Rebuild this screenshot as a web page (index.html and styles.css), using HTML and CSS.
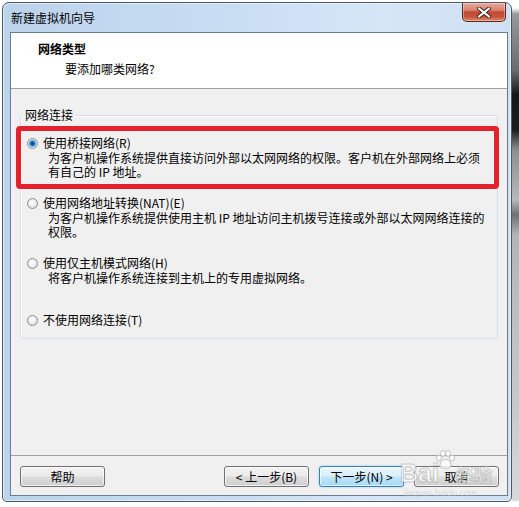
FILE: index.html
```html
<!DOCTYPE html>
<html lang="zh-CN">
<head>
<meta charset="utf-8">
<title>新建虚拟机向导</title>
<link rel="stylesheet" href="styles.css">
</head>
<body>
<div class="page">
  <div class="window">
    <div class="titlebar">
      <span class="title">新建虚拟机向导</span>
      <span class="close">
        <svg width="14" height="11" viewBox="0 0 14 11">
          <path d="M2 1.5 L12 9.5 M12 1.5 L2 9.5" stroke="#3a2420" stroke-width="4" stroke-linecap="round"/>
          <path d="M2 1.5 L12 9.5 M12 1.5 L2 9.5" stroke="#ffffff" stroke-width="2.2" stroke-linecap="round"/>
        </svg>
      </span>
    </div>
    <div class="client">
      <div class="header">
        <div class="h-title">网络类型</div>
        <div class="h-sub">要添加哪类网络?</div>
      </div>
      <div class="content">
        <fieldset class="group">
          <legend>网络连接</legend>
          <div class="options">
            <div class="option">
              <div class="opt-label"><span class="radio checked"></span>使用桥接网络(R)</div>
              <div class="opt-desc">为客户机操作系统提供直接访问外部以太网网络的权限。客户机在外部网络上必须<br>有自己的 IP 地址。</div>
            </div>
            <div class="option">
              <div class="opt-label"><span class="radio"></span>使用网络地址转换(NAT)(E)</div>
              <div class="opt-desc">为客户机操作系统提供使用主机 IP 地址访问主机拨号连接或外部以太网网络连接的<br>权限。</div>
            </div>
            <div class="option option-tall">
              <div class="opt-label"><span class="radio"></span>使用仅主机模式网络(H)</div>
              <div class="opt-desc">将客户机操作系统连接到主机上的专用虚拟网络。</div>
            </div>
            <div class="option">
              <div class="opt-label"><span class="radio"></span>不使用网络连接(T)</div>
            </div>
          </div>
        </fieldset>
        <div class="highlight"></div>
      </div>
      <div class="footer">
        <button class="btn">帮助</button>
        <span class="spacer"></span>
        <button class="btn">&lt; 上一步(B)</button>
        <button class="btn btn-default">下一步(N) &gt;</button>
        <button class="btn">取消</button>
      </div>
    </div>
  </div>
  <div class="desk"></div>
  <div class="watermark">
    <span class="wm-bai">Bai</span>
    <svg class="wm-paw" width="22" height="20" viewBox="0 0 22 20">
      <g fill="rgba(255,255,255,0.8)" stroke="rgba(170,170,170,0.7)" stroke-width="1">
        <ellipse cx="5" cy="8" rx="2.5" ry="3"/>
        <ellipse cx="9" cy="3.5" rx="2.5" ry="3"/>
        <ellipse cx="14" cy="3.5" rx="2.5" ry="3"/>
        <ellipse cx="18" cy="8" rx="2.5" ry="3"/>
        <path d="M6 16 C6 11 9 9.5 11.5 9.5 C14 9.5 17 11 17 16 C17 19 6 19 6 16 Z"/>
      </g>
    </svg>
    <span class="wm-jy">经验</span>
    <span class="wm-url">jingyan.baidu.com</span>
  </div>
</div>
</body>
</html>
```
FILE: styles.css
```css
html, body {
  margin: 0;
  padding: 0;
  background: #ffffff;
}
body {
  font-family: "Noto Sans CJK SC", "Liberation Sans", sans-serif;
  font-size: 12px;
  color: #000;
}
.page {
  position: relative;
  width: 519px;
  height: 507px;
  display: flex;
  align-items: flex-start;
  overflow: hidden;
}
.window {
  margin: 2px 0 0 2px;
  width: 510px;
  height: 500px;
  box-sizing: border-box;
  border: 1px solid #4a5866;
  border-radius: 7px 7px 5px 5px;
  background: linear-gradient(to right, #bcd3ec 0%, #c7dcf2 40%, #d6e6f7 75%, #cfe0f3 100%);
  box-shadow: inset 0 0 0 1px rgba(255,255,255,0.55);
  display: flex;
  flex-direction: column;
}
.titlebar {
  height: 29px;
  display: flex;
  align-items: flex-start;
}
.title {
  padding: 8px 0 0 8px;
  line-height: 14px;
  color: #000;
  flex: 1;
}
.close {
  width: 44px;
  height: 19px;
  margin-right: 5px;
  box-sizing: border-box;
  border: 1px solid #5b2a22;
  border-top: none;
  border-radius: 0 0 5px 5px;
  background: linear-gradient(to bottom, #e9a99b 0%, #d8826f 40%, #c24a30 50%, #c3523a 75%, #e08a64 100%);
  box-shadow: inset 0 0 0 1px rgba(255,255,255,0.35);
  display: flex;
  align-items: center;
  justify-content: center;
}
.client {
  margin: 0 3px 0 7px;
  width: 498px;
  height: 464px;
  box-sizing: border-box;
  border: 1px solid #6a7c90;
  background: #f0f0f0;
  display: flex;
  flex-direction: column;
}
.header {
  height: 55px;
  background: #ffffff;
  border-bottom: 1px solid #a0a0a0;
  padding: 9px 0 0 27px;
  box-sizing: content-box;
  height: 46px;
}
.h-title {
  font-weight: bold;
  line-height: 14px;
}
.h-sub {
  line-height: 14px;
  margin-top: 6px;
  padding-left: 27px;
}
.content {
  position: relative;
  height: 366px;
  box-sizing: border-box;
  padding: 19px 9px 0 9px;
}
.group {
  margin: 0;
  width: 478px;
  height: 231px;
  box-sizing: border-box;
  border: 1px solid #d5dfe5;
  border-radius: 3px;
  padding: 14px 6px 0 6px;
  box-shadow: inset 1px 1px 0 #fff;
}
.group legend {
  padding: 0 2px;
  margin-left: -4px;
  line-height: 14px;
}
.options {
  display: flex;
  flex-direction: column;
  gap: 17px;
}
.option-tall {
  min-height: 40px;
}
.opt-label {
  display: flex;
  align-items: center;
  gap: 5px;
  line-height: 14px;
  white-space: nowrap;
}
.opt-desc {
  margin-top: 1px;
  padding-left: 21px;
  line-height: 14px;
  white-space: nowrap;
}
.radio {
  width: 11px;
  height: 11px;
  box-sizing: border-box;
  border-radius: 50%;
  border: 1px solid #8a8c8e;
  background: radial-gradient(circle at 45% 40%, #ffffff 0, #eeeeee 45%, #cfd1d3 100%);
  flex: none;
}
.radio.checked {
  background: radial-gradient(circle at 50% 50%, #0c3a66 0, #1c66ad 1.6px, #3c8fd6 2.6px, #9ccdf2 3.6px, #f2f2f2 4.3px, #d6d8da 100%);
}
.highlight {
  position: absolute;
  left: 5px;
  top: 37px;
  width: 483px;
  height: 63px;
  box-sizing: border-box;
  border: 5px solid #e3222c;
  border-radius: 4px;
}
.footer {
  height: 40px;
  box-sizing: border-box;
  border-top: 1px solid #a0a0a0;
  padding: 10px 8px 0 9px;
  display: flex;
  align-items: flex-start;
  gap: 10px;
}
.spacer {
  flex: 1;
}
.btn {
  width: 85px;
  height: 21px;
  margin: 0;
  padding: 0;
  box-sizing: border-box;
  border: 1px solid #707070;
  border-radius: 3px;
  background: linear-gradient(to bottom, #f2f2f2 0%, #ebebeb 48%, #dddddd 52%, #cfcfcf 100%);
  box-shadow: inset 0 0 0 1px rgba(255,255,255,0.7);
  font-family: "Noto Sans CJK SC", "Liberation Sans", sans-serif;
  font-size: 12px;
  line-height: 17px;
  color: #000;
}
.btn-default {
  border-color: #3c7fb1;
  background: linear-gradient(to bottom, #eaf6fd 0%, #d9f0fc 48%, #bee6fd 52%, #a7d9f5 100%);
  box-shadow: inset 0 0 0 1px rgba(255,255,255,0.6), 0 0 2px #6ccaf0;
}
.desk {
  flex: 1;
  height: 507px;
  background: linear-gradient(to bottom, #ffffff 0, #ffffff 8px, #9a9a9a 14px, #6c6c6c 70px, #151515 95px, #1e1e1e 130px, #8f8f8f 150px, #b8b8b8 200px, #707070 215px, #b5b5b5 235px, #c8c8c8 400px, #d8d8d8 500px, #ffffff 502px);
}
.watermark {
  position: absolute;
  left: 400px;
  top: 450px;
  width: 100px;
  height: 50px;
  pointer-events: none;
}
.wm-bai {
  position: absolute;
  left: 0;
  top: 8px;
  font-family: "Liberation Sans", sans-serif;
  font-weight: bold;
  font-size: 25px;
  line-height: 30px;
  color: rgba(255,255,255,0.7);
  -webkit-text-stroke: 1px rgba(160,160,160,0.55);
}
.wm-paw {
  position: absolute;
  left: 34px;
  top: 0;
}
.wm-jy {
  position: absolute;
  left: 56px;
  top: 13px;
  font-size: 18px;
  line-height: 22px;
  font-weight: bold;
  color: rgba(255,255,255,0.6);
  -webkit-text-stroke: 1px rgba(160,160,160,0.5);
}
.wm-url {
  position: absolute;
  left: 4px;
  top: 38px;
  font-family: "Liberation Sans", sans-serif;
  font-size: 9px;
  line-height: 10px;
  color: rgba(200,200,200,0.6);
  white-space: nowrap;
}
```
